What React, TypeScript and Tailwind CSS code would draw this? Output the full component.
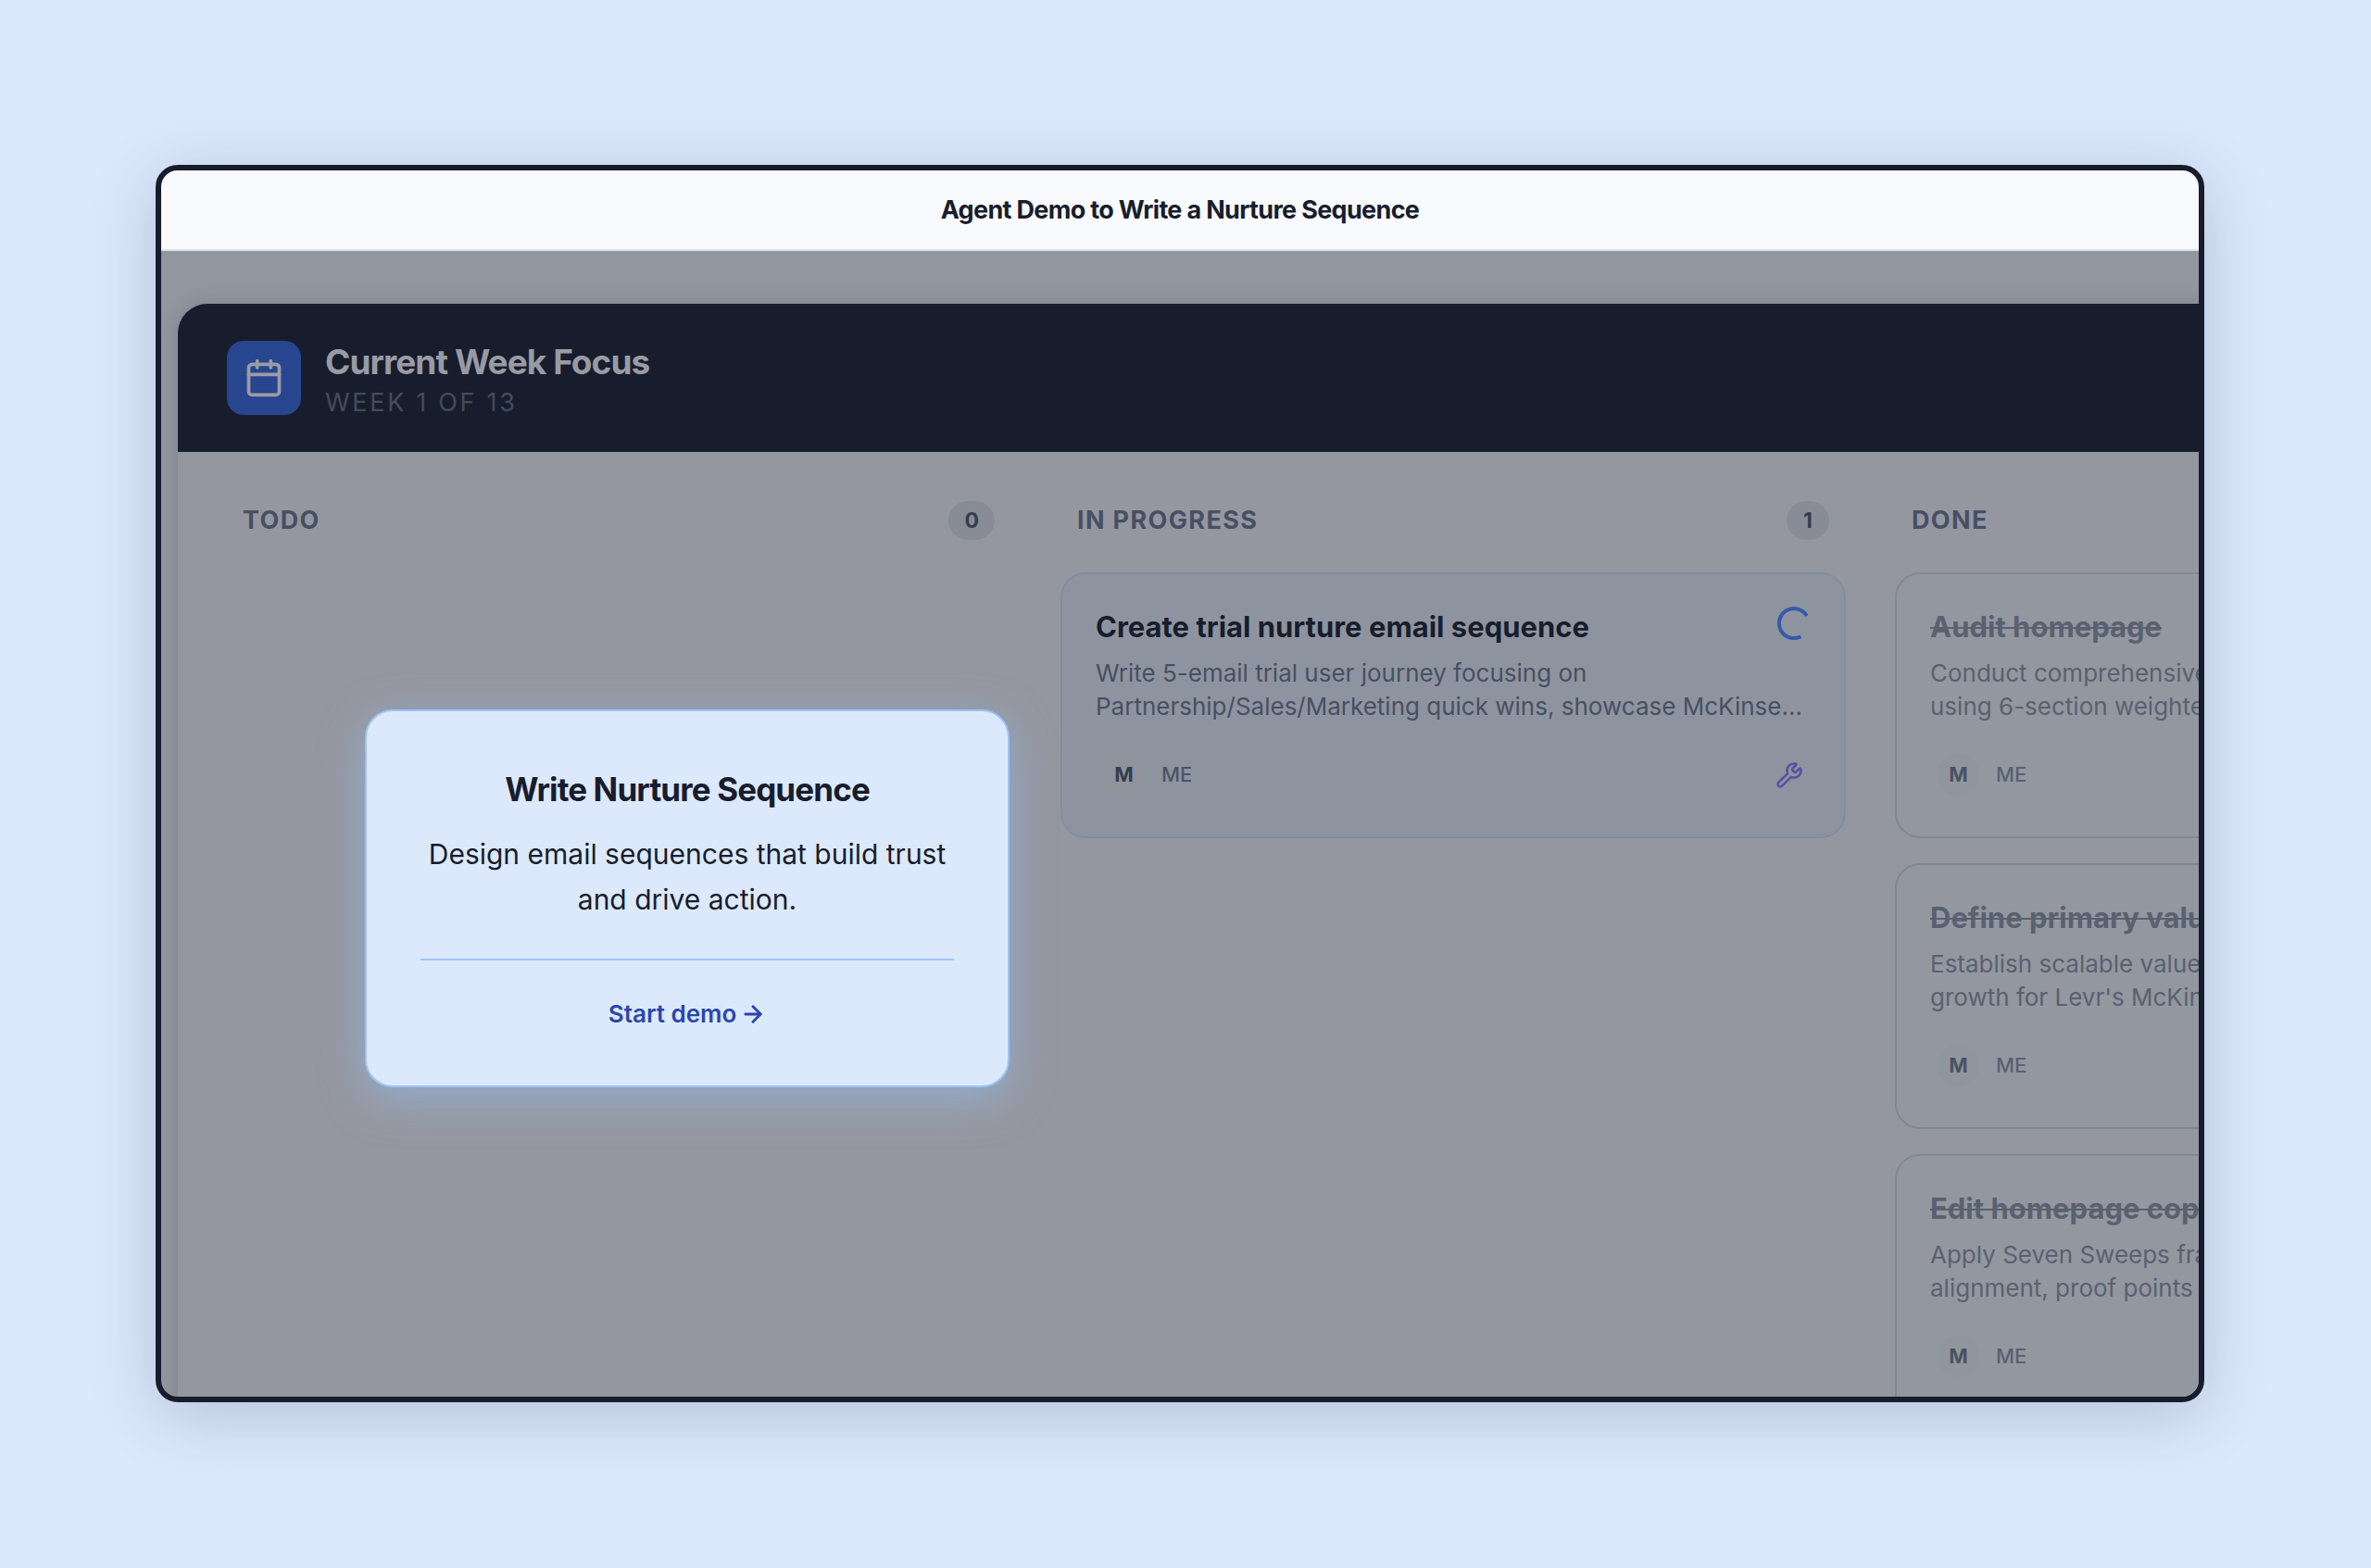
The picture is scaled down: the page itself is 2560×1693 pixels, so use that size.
import { ArrowRight, Calendar, Wrench } from 'lucide-react';

interface Task {
  id: string;
  title: string;
  lines: string[];
  done: boolean;
}

interface Column {
  id: string;
  label: string;
  count: number;
  tasks: Task[];
}

const columns: Column[] = [
  { id: 'todo', label: 'TODO', count: 0, tasks: [] },
  {
    id: 'progress',
    label: 'IN PROGRESS',
    count: 1,
    tasks: [
      {
        id: 'nurture',
        title: 'Create trial nurture email sequence',
        lines: ['Write 5-email trial user journey focusing on', 'Partnership/Sales/Marketing quick wins, showcase McKinse...'],
        done: false,
      },
    ],
  },
  {
    id: 'done',
    label: 'DONE',
    count: 3,
    tasks: [
      {
        id: 'audit',
        title: 'Audit homepage',
        lines: ['Conduct comprehensive', 'using 6-section weighted'],
        done: true,
      },
      {
        id: 'value',
        title: 'Define primary value',
        lines: ['Establish scalable value', "growth for Levr's McKinsey"],
        done: true,
      },
      {
        id: 'copy',
        title: 'Edit homepage copy',
        lines: ['Apply Seven Sweeps framework', 'alignment, proof points'],
        done: true,
      },
    ],
  },
];

function Spinner() {
  return (
    <svg viewBox="0 0 36 36" className="h-9 w-9 shrink-0" fill="none" stroke="#365ba6" strokeWidth="4">
      <path d="M31.8 10A16 16 0 1 0 25.4 32.2" />
    </svg>
  );
}

function TaskCard({ task }: { task: Task }) {
  return (
    <article
      className={
        task.done
          ? 'rounded-[27px] border-2 border-[#818893] bg-[#93979f] px-9 pt-[35px] pb-9'
          : 'rounded-[27px] border-2 border-[#838da2] bg-[#8e949f] px-9 pt-[35px] pb-9'
      }
    >
      <div className="flex h-11 items-start justify-between">
        <h3
          className={
            task.done
              ? 'text-[31px] leading-[44px] font-bold whitespace-nowrap text-[#596171] line-through decoration-2'
              : 'text-[31px] leading-[44px] font-bold whitespace-nowrap text-[#181d2d]'
          }
        >
          {task.title}
        </h3>
        {!task.done && <Spinner />}
      </div>
      <p
        className={
          task.done
            ? 'mt-[10px] text-[26px] leading-9 whitespace-nowrap text-[#596171]'
            : 'mt-[10px] text-[26px] leading-9 whitespace-nowrap text-[#465063]'
        }
      >
        {task.lines[0]}
        <br />
        {task.lines[1]}
      </p>
      <div className="mt-[25px] flex items-center gap-[18px] p-2">
        <span
          className={
            task.done
              ? 'flex h-[45px] w-[45px] items-center justify-center rounded-full bg-[#91959d] text-[22px] font-bold text-[#4a5262]'
              : 'flex h-[45px] w-[45px] items-center justify-center rounded-full bg-[#8f939b] text-[22px] font-bold text-[#343d4e]'
          }
        >
          M
        </span>
        <span className={task.done ? 'text-[22px] font-medium text-[#596171]' : 'text-[22px] font-medium text-[#4a5366]'}>ME</span>
        {!task.done && <Wrench className="ml-auto h-[30px] w-[30px] text-[#5c4da3]" strokeWidth={2} />}
      </div>
    </article>
  );
}

function BoardColumn({ column }: { column: Column }) {
  return (
    <section className="w-[848px] shrink-0">
      <div className="flex h-[42px] items-center justify-between px-[18px]">
        <h2 className="text-[27px] font-bold tracking-wider text-[#465064]">{column.label}</h2>
        <span className="flex h-[42px] min-w-[46px] items-center justify-center rounded-full bg-[#888c97] px-[17px] text-[23px] font-bold text-[#343d4e]">
          {column.count}
        </span>
      </div>
      <div className="mt-[35px] flex flex-col gap-[27px]">
        {column.tasks.map((task) => (
          <TaskCard key={task.id} task={task} />
        ))}
      </div>
    </section>
  );
}

function Board() {
  return (
    <div className="mt-[57px] ml-[18px] w-max rounded-t-[32px] bg-[#9597a0] shadow-[0_0_18px_rgba(70,80,95,0.3)]">
      <header className="flex h-[160px] items-center gap-[26px] rounded-t-[32px] bg-[#181d2d] px-[53px]">
        <div className="flex h-20 w-20 items-center justify-center rounded-[18px] bg-[#28458f]">
          <Calendar className="h-11 w-11 text-[#9a9da5]" strokeWidth={2} />
        </div>
        <div className="pt-2">
          <h1 className="text-[37px] leading-[46px] font-bold tracking-tight text-[#989ba4]">Current Week Focus</h1>
          <p className="text-[27px] leading-[42px] tracking-widest text-[#434b5d]">WEEK 1 OF 13</p>
        </div>
      </header>
      <div className="flex gap-[53px] px-[52px] py-[53px]">
        {columns.map((column) => (
          <BoardColumn key={column.id} column={column} />
        ))}
      </div>
    </div>
  );
}

function DemoPrompt() {
  return (
    <div className="absolute top-[40%] left-[10%] w-[696px] rounded-[30px] border-2 border-[#9cc4fa] bg-[#dce9fd] px-[58px] py-[59px] text-center shadow-[0_13px_46px_rgba(147,197,253,0.5)]">
      <h2 className="text-[35px] leading-[50px] font-bold tracking-tight text-[#181d2d]">Write Nurture Sequence</h2>
      <p className="mt-[21px] text-[30px] leading-[49px] text-[#181d2d]">
        Design email sequences that build trust
        <br />
        and drive action.
      </p>
      <div className="mt-[39px] flex justify-center border-t-2 border-[#9cc4fa] pt-[40px]">
        <button type="button" className="flex items-center gap-1 text-[26px] leading-[36px] font-semibold text-[#2b45ad]">
          Start demo
          <ArrowRight className="h-7 w-7" strokeWidth={2.5} />
        </button>
      </div>
    </div>
  );
}

export default function App() {
  return (
    <main className="flex h-screen flex-col bg-[#dce9fd] pt-[178px] pr-[180px] pb-[179px] pl-[168px] font-['Inter',sans-serif]">
      <div className="flex min-h-0 flex-1 flex-col overflow-hidden rounded-3xl border-6 border-[#181d2d] bg-[#92969e] shadow-[0_14px_72px_rgba(24,35,50,0.2)]">
        <div className="flex h-[87px] shrink-0 items-center justify-center border-b-2 border-[#dfe4ea] bg-[#f9fafd]">
          <p className="text-[27px] leading-[42px] font-bold tracking-tight text-[#181d2d]">Agent Demo to Write a Nurture Sequence</p>
        </div>
        <div className="relative min-h-0 flex-1 overflow-hidden">
          <Board />
          <DemoPrompt />
        </div>
      </div>
    </main>
  );
}
